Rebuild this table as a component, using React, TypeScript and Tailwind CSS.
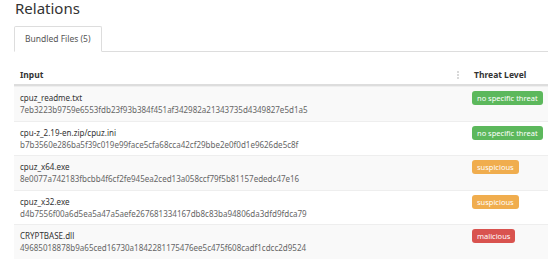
import React from "react";

type Row = {
  name: string;
  hash: string;
  level: "clean" | "suspicious" | "malicious";
};

const rows: Row[] = [
  {
    name: "cpuz_readme.txt",
    hash: "7eb3223b9759e6553fdb23f93b384f451af342982a21343735d4349827e5d1a5",
    level: "clean",
  },
  {
    name: "cpu-z_2.19-en.zip/cpuz.ini",
    hash: "b7b3560e286ba5f39c019e99face5cfa68cca42cf29bbe2e0f0d1e9626de5c8f",
    level: "clean",
  },
  {
    name: "cpuz_x64.exe",
    hash: "8e0077a742183fbcbb4f6cf2fe945ea2ced13a058ccf79f5b81157ededc47e16",
    level: "suspicious",
  },
  {
    name: "cpuz_x32.exe",
    hash: "d4b7556f00a6d5ea5a47a5aefe267681334167db8c83ba94806da3dfd9fdca79",
    level: "suspicious",
  },
  {
    name: "CRYPTBASE.dll",
    hash: "49685018878b9a65ced16730a1842281175476ee5c475f608cadf1cdcc2d9524",
    level: "malicious",
  },
];

const Badge = ({ level }: { level: Row["level"] }) => {
  if (level === "clean")
    return (
      <span className="block rounded-[3px] bg-[#5cb85c] px-[5px] py-[2px] text-[7.5px] leading-[10px] text-white">
        no specific threat
      </span>
    );
  if (level === "suspicious")
    return (
      <span className="block rounded-[3px] bg-[#f0ad4e] px-[5px] py-[2px] text-[7.5px] leading-[10px] text-white">
        suspicious
      </span>
    );
  return (
    <span className="block rounded-[3px] bg-[#d9534f] px-[5px] py-[2px] text-[7.5px] leading-[10px] text-white">
      malicious
    </span>
  );
};

export default function App() {
  return (
    <div className="h-[271px] w-[550px] overflow-hidden bg-white font-['Noto_Sans',sans-serif] text-[#333]">
      <h2 className="pl-[15px] text-[15px] leading-[17px] font-normal text-[#333]">
        Relations
      </h2>

      {/* tabs */}
      <div className="mt-[9px] ml-[14px] mr-[2px] flex border-b border-[#ddd]">
        <div className="-mb-px flex h-[26px] items-center rounded-t-[2px] border border-b-white border-[#ddd] bg-white px-[10px] text-[8.5px] text-[#555]">
          Bundled Files (5)
        </div>
      </div>

      {/* table */}
      <div className="mt-[16px] ml-[14px] mr-[2px]">
        <div className="flex h-[18px] items-center border-b-2 border-[#ddd] pb-[2px] text-[8.5px] font-bold text-[#333]">
          <div className="flex-1 pl-[6px]">Input</div>
          <div className="mr-[13px] flex w-[4px] flex-col items-center gap-[1px]">
            <span className="h-[2px] w-[2px] rounded-full bg-[#ccc]" />
            <span className="h-[2px] w-[2px] rounded-full bg-[#ccc]" />
            <span className="h-[2px] w-[2px] rounded-full bg-[#ccc]" />
          </div>
          <div className="w-[75px] pl-[1px]">Threat Level</div>
        </div>
        {rows.map((r, i) => (
          <div
            key={r.hash}
            className={`flex h-[34.5px] border-t border-[#eee] first:border-t-0 ${
              i % 2 === 0 ? "bg-[#f9f9f9]" : "bg-white"
            }`}
          >
            <div className="flex-1 pl-[6px] pt-[5px]">
              <div className="text-[8px] leading-[12px] text-[#333]">{r.name}</div>
              <div className="text-[8px] leading-[12px] text-[#666]">{r.hash}</div>
            </div>
            <div className="flex w-[76px] items-start pt-[4px]">
              <Badge level={r.level} />
            </div>
          </div>
        ))}
      </div>
    </div>
  );
}
